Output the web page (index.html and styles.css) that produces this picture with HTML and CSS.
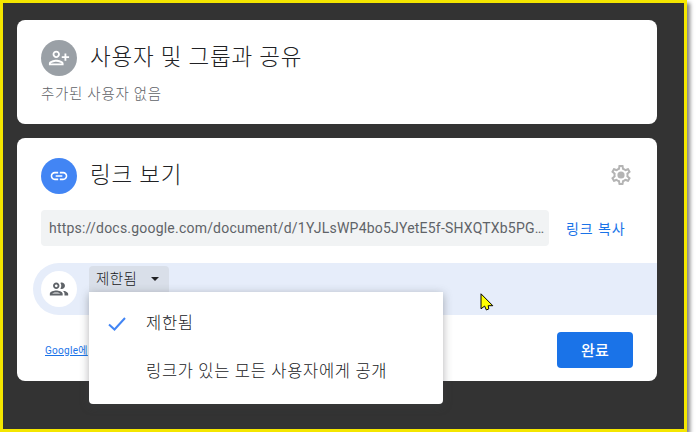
FILE: index.html
```html
<!DOCTYPE html>
<html lang="ko">
<head>
<meta charset="utf-8">
<title>링크 보기</title>
<link rel="stylesheet" href="styles.css">
</head>
<body>
<div class="frame">
  <section class="card card-people">
    <div class="head">
      <span class="avatar avatar-gray">
        <svg class="icon-22" viewBox="0 0 24 24"><path transform="matrix(-1 0 0 1 24 0)" fill="#fff" d="M15 12c2.21 0 4-1.79 4-4s-1.79-4-4-4-4 1.79-4 4 1.79 4 4 4zm0-6c1.1 0 2 .9 2 2s-.9 2-2 2-2-.9-2-2 .9-2 2-2zm0 8c-2.67 0-8 1.34-8 4v2h16v-2c0-2.66-5.33-4-8-4zm-6 4c.22-.72 3.31-2 6-2 2.7 0 5.8 1.29 6 2H9zm-3-3v-3h3v-2H6V7H4v3H1v2h3v3h2z"/></svg>
      </span>
      <h2 class="title">사용자 및 그룹과 공유</h2>
    </div>
    <p class="empty">추가된 사용자 없음</p>
  </section>

  <section class="card card-link">
    <div class="head head-link">
      <span class="avatar avatar-blue">
        <svg class="icon-20" viewBox="0 0 24 24"><path fill="#fff" d="M3.9 12c0-1.71 1.39-3.1 3.1-3.1h4V7H7c-2.76 0-5 2.24-5 5s2.24 5 5 5h4v-1.9H7c-1.71 0-3.1-1.39-3.1-3.1zM8 13h8v-2H8v2zm9-6h-4v1.9h4c1.71 0 3.1 1.39 3.1 3.1s-1.39 3.1-3.1 3.1h-4V17h4c2.76 0 5-2.24 5-5s-2.24-5-5-5z"/></svg>
      </span>
      <h2 class="title">링크 보기</h2>
      <svg class="gear" viewBox="0 0 24 24"><path fill="#b4b4b4" d="M19.43 12.98c.04-.32.07-.64.07-.98 0-.34-.03-.66-.07-.98l2.11-1.65c.19-.15.24-.42.12-.64l-2-3.46c-.09-.16-.26-.25-.44-.25-.06 0-.12.01-.17.03l-2.49 1c-.52-.4-1.08-.73-1.69-.98l-.38-2.65C14.46 2.18 14.25 2 14 2h-4c-.25 0-.46.18-.49.42l-.38 2.65c-.61.25-1.17.59-1.69.98l-2.49-1c-.06-.02-.12-.03-.18-.03-.17 0-.34.09-.43.25l-2 3.46c-.13.22-.07.49.12.64l2.11 1.65c-.04.32-.07.65-.07.98 0 .33.03.66.07.98l-2.11 1.65c-.19.15-.24.42-.12.64l2 3.46c.09.16.26.25.44.25.06 0 .12-.01.17-.03l2.49-1c.52.4 1.08.73 1.69.98l.38 2.65c.03.24.24.42.49.42h4c.25 0 .46-.18.49-.42l.38-2.65c.61-.25 1.17-.59 1.69-.98l2.49 1c.06.02.12.03.18.03.17 0 .34-.09.43-.25l2-3.46c.12-.22.07-.49-.12-.64l-2.11-1.65zm-1.98-1.71c.04.31.05.52.05.73 0 .21-.02.43-.05.73l-.14 1.13.89.7 1.08.84-.7 1.21-1.27-.51-1.04-.42-.9.68c-.43.32-.84.56-1.25.73l-1.06.43-.16 1.13-.2 1.35h-1.4l-.19-1.35-.16-1.13-1.06-.43c-.43-.18-.83-.41-1.23-.71l-.91-.7-1.06.43-1.27.51-.7-1.21 1.08-.84.89-.7-.14-1.13c-.03-.31-.05-.54-.05-.74s.02-.43.05-.73l.14-1.13-.89-.7-1.08-.84.7-1.21 1.27.51 1.04.42.9-.68c.43-.32.84-.56 1.25-.73l1.06-.43.16-1.13.2-1.35h1.39l.19 1.35.16 1.13 1.06.43c.43.18.83.41 1.23.71l.91.7 1.06-.43 1.27-.51.7 1.21-1.07.85-.89.7.14 1.13z"/><circle cx="12" cy="12" r="3.6" fill="#b4b4b4"/></svg>
    </div>

    <div class="url-row">
      <div class="url">https://docs.google.com/document/d/1YJLsWP4bo5JYetE5f-SHXQTXb5PG…</div>
      <a class="copy">링크 복사</a>
    </div>

    <div class="access">
      <span class="avatar avatar-white">
        <svg class="icon-22" viewBox="0 0 24 24"><path fill="#5f6368" d="M9 13.75c-2.34 0-7 1.17-7 3.5V19h14v-1.75c0-2.33-4.66-3.5-7-3.5zM4.34 17c.84-.58 2.87-1.25 4.66-1.25s3.82.67 4.66 1.25H4.34zM9 12c1.93 0 3.5-1.57 3.5-3.5S10.93 5 9 5 5.5 6.57 5.5 8.5 7.07 12 9 12zm0-5c.83 0 1.5.67 1.5 1.5S9.83 10 9 10s-1.5-.67-1.5-1.5S8.17 7 9 7zm7.04 6.81c1.16.84 1.96 1.96 1.96 3.44V19h4v-1.75c0-2.02-3.5-3.17-5.96-3.44zM15 12c1.93 0 3.5-1.57 3.5-3.5S16.93 5 15 5c-.54 0-1.04.13-1.5.35.63.89 1 1.98 1 3.15s-.37 2.26-1 3.15c.46.22.96.35 1.5.35z"/></svg>
      </span>
      <div class="chip">제한됨<span class="caret"></span></div>
      <ul class="menu">
        <li class="menu-item">
          <svg class="check" viewBox="0 0 18 14"><path d="M1 7.5l5.5 5L17 1" fill="none" stroke="#4285f4" stroke-width="2"/></svg>
          <span>제한됨</span>
        </li>
        <li class="menu-item"><span>링크가 있는 모든 사용자에게 공개</span></li>
      </ul>
      <svg class="cursor" viewBox="0 0 14 18"><path d="M1 .8v15l3.6-2.7 1.8 3.9 2.4-1.1-.6-3.2h4.6z" fill="#ffff00" stroke="#000" stroke-width="1"/></svg>
    </div>

    <div class="foot">
      <a class="policy">Google에</a>
      <button class="done">완료</button>
    </div>
  </section>
</div>
</body>
</html>
```

FILE: styles.css
```css
* { box-sizing: border-box; }

html, body {
  margin: 0;
  background: #fff;
  overflow: hidden;
}

body {
  font-family: Roboto, "Noto Sans CJK KR", sans-serif;
}

.frame {
  width: 687px;
  height: 432px;
  padding: 17px 27px 0 14px;
  display: flex;
  flex-direction: column;
  gap: 14px;
  background: #333;
  border: 3px solid #f4e600;
  box-shadow: 3px 3px 4px rgba(0, 0, 0, 0.5);
}

.card {
  width: 640px;
  background: #fff;
  border-radius: 8px;
}

.card-people {
  height: 104px;
  padding: 20px 24px 0;
}

.card-link {
  height: 243px;
  padding-top: 20px;
}

.head {
  display: flex;
  align-items: center;
  gap: 13px;
  height: 36px;
}

.head-link {
  padding: 0 24px 0 24px;
}

.avatar {
  flex: none;
  width: 36px;
  height: 36px;
  border-radius: 50%;
  display: flex;
  align-items: center;
  justify-content: center;
}

.avatar-gray { background: #9aa0a6; }
.avatar-blue { background: #4285f4; }
.avatar-white { background: #fff; }

.icon-22 { width: 22px; height: 22px; }
.icon-20 { width: 20px; height: 20px; }

.title {
  margin: -2px 0 0;
  font-size: 22.5px;
  font-weight: 300;
  line-height: 28px;
  letter-spacing: 0.8px;
  color: #202124;
}

.gear {
  width: 24px;
  height: 24px;
  margin: -2px 0 0 auto;
}

.empty {
  margin: 10px 0 0;
  font-size: 14.5px;
  font-weight: 300;
  line-height: 18px;
  letter-spacing: 0.7px;
  color: #5f6368;
}

.url-row {
  display: flex;
  align-items: center;
  margin-top: 16px;
  padding-left: 24px;
}

.url {
  width: 508px;
  height: 36px;
  padding: 0 8px;
  background: #f1f3f4;
  border-radius: 4px;
  font-size: 14px;
  line-height: 36px;
  letter-spacing: 0.21px;
  color: #5f6368;
  white-space: nowrap;
  overflow: hidden;
}

.copy {
  margin-left: 17px;
  font-size: 14px;
  font-weight: 400;
  letter-spacing: 0.9px;
  color: #1a73e8;
}

.access {
  position: relative;
  display: flex;
  align-items: flex-start;
  height: 52px;
  margin: 17px 0 0 16px;
  padding: 8px 0 0 8px;
  background: #e6edfa;
  border-radius: 26px 0 0 26px;
}

.chip {
  display: flex;
  align-items: center;
  width: 80px;
  height: 26px;
  margin: -5px 0 0 12px;
  padding: 0 0 4px 7px;
  background: #d9dfe9;
  border-radius: 4px 4px 0 0;
  font-size: 14.5px;
  font-weight: 300;
  letter-spacing: 0.4px;
  color: #202124;
}

.caret {
  width: 0;
  height: 0;
  margin: 4px 0 0 14px;
  border-left: 4px solid transparent;
  border-right: 4px solid transparent;
  border-top: 4px solid #202124;
}

.menu {
  position: absolute;
  left: 56px;
  top: 29px;
  width: 354px;
  height: 112px;
  margin: 0;
  padding: 6px 0 0;
  list-style: none;
  background: #fff;
  border-radius: 0 0 4px 4px;
  box-shadow: 0 2px 10px rgba(60, 64, 67, 0.4);
  z-index: 2;
}

.menu-item {
  display: flex;
  align-items: center;
  height: 48px;
  padding-left: 57px;
  font-size: 16.5px;
  font-weight: 300;
  letter-spacing: 0.7px;
  color: #202124;
}

.check {
  width: 18px;
  height: 14px;
  margin: 3px 20px 0 -38px;
}

.cursor {
  position: absolute;
  left: 447px;
  top: 30px;
  width: 14px;
  height: 18px;
}

.foot {
  display: flex;
  align-items: center;
  justify-content: space-between;
  margin-top: 17px;
  padding: 0 24px 0 28px;
}

.policy {
  margin-top: -2px;
  font-size: 10px;
  letter-spacing: 0.3px;
  color: #1a73e8;
  text-decoration: underline;
}

.done {
  width: 76px;
  height: 36px;
  padding: 0 0 1px;
  border: 0;
  border-radius: 4px;
  background: #1a73e8;
  color: #fff;
  font-family: inherit;
  font-size: 15px;
  font-weight: 500;
  letter-spacing: 0.3px;
}
```
